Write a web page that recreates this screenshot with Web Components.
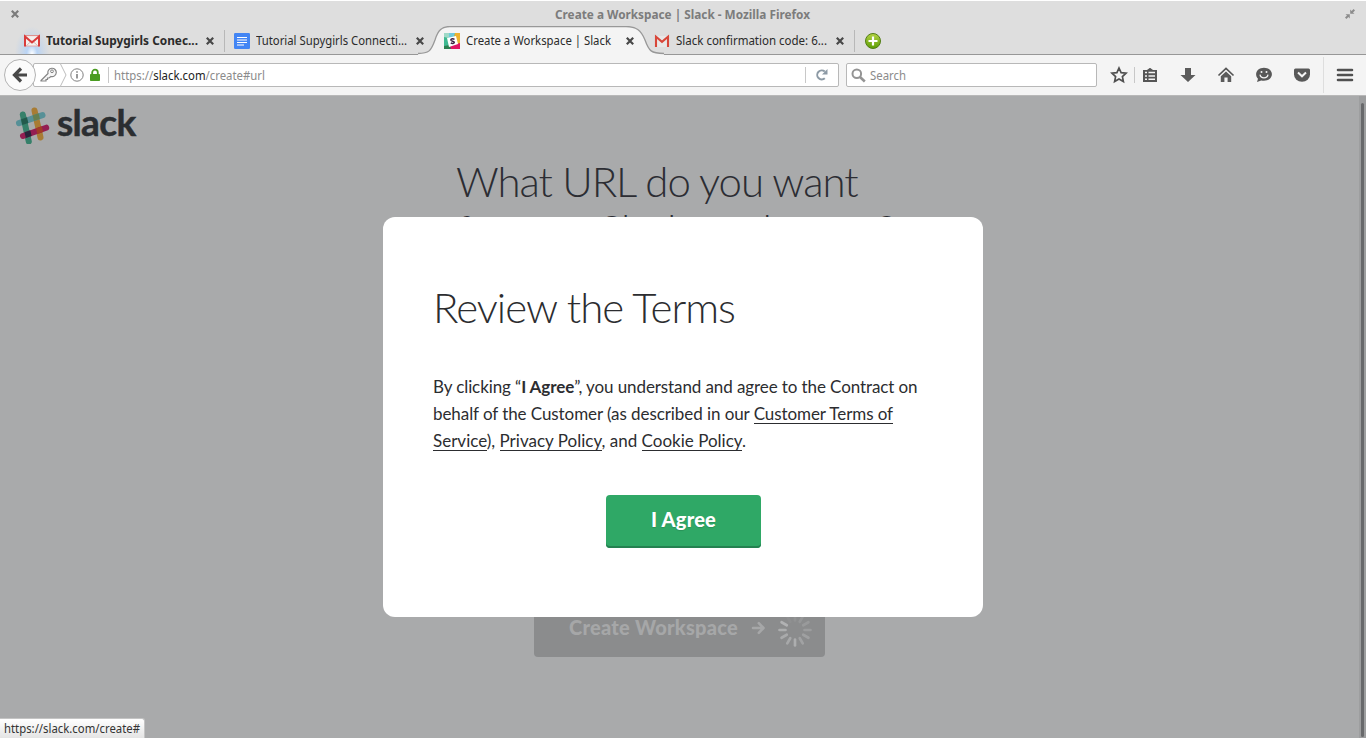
<!DOCTYPE html>
<html lang="en"><head><meta charset="utf-8"><title>Create a Workspace | Slack</title>
<style>html,body{margin:0;height:100%;overflow:hidden}body{font:12px "Noto Sans","Open Sans",sans-serif}</style></head>
<body><browser-window></browser-window>
<script>
const define=(name,html,after)=>customElements.define(name,class extends HTMLElement{
  connectedCallback(){
    if(this.shadowRoot)return;
    const t=document.createElement('template');
    t.innerHTML=typeof html==='function'?html(this):html;
    this.attachShadow({mode:'open'}).append(t.content.cloneNode(true));
    if(after)after(this);
  }
});

// A single text line fitted to a given width, by tracking or (with "narrow") by condensing the glyphs.
define('fit-text','<style>:host{display:block;white-space:nowrap}span{display:inline-block;white-space:pre;transform-origin:0 50%}</style><span><slot></slot></span>',el=>{
  const s=el.shadowRoot.querySelector('span'),w=+el.getAttribute('w'),n=s.getBoundingClientRect().width;
  if(el.hasAttribute('narrow')){el.style.width=w+'px';s.style.transform=`scaleX(${w/n})`}
  else s.style.letterSpacing=(w-n)/el.textContent.length+'px';
});

const icons={
x:[10,10,'<path d="M1.800 1.800l6.400 6.400M8.200 1.800l-6.400 6.400" stroke="currentColor" stroke-width="2.200"/>'],
gmail:[18,16,'<path d="M2 3h14v10H2z" fill="#f4f0ef"/><path d="M3 13l6-5.500 6 5.500" fill="none" stroke="#d8b5b3"/><path d="M2 2.600h14" stroke="#e08884"/><path d="M2 13h14" stroke="#e8aaa7"/><path d="M2 13.500V3.500l7 6 7-6v10" fill="none" stroke="#d93b3b" stroke-width="2"/>'],
gmail2:[18,16,'<path d="M3 3h12v11H3z" fill="#e8e8e8"/><path d="M3 14V3.800l6 5 6-5V14" fill="none" stroke="#d8473a" stroke-width="2.100"/>'],
doc:[16,16,'<rect width="16" height="16" rx="1.2" fill="#4285f4"/><path d="M3 4.500h10M3 7h10M3 9.500h10M3 12h7" stroke="#fff" stroke-width="1.2"/>'],
slack:[16,16,'<path d="M0 0h16v16H0z" fill="#3eb991"/><path d="M0 0h7L4.500 5 0 4z" fill="#9fd9c7"/><path d="M5 0h6l-1 4-5 1z" fill="#70cadb"/><path d="M11 0h5v11l-4 1-2-8z" fill="#ecb22e"/><path d="M0 13l12-2 4 5H0z" fill="#2b7f50"/><path d="M6 13l10-3v6H7z" fill="#e01563"/><path d="M3 5l9-2 2 8-9 3z" fill="#fff"/><path d="M10.500 6.300C8.500 5.300 6.500 6 7 7.300c.5 1.200 3.200.5 3.300 2 0 1.500-2.300 1.500-3.500.6" fill="none" stroke="#3c2140" stroke-width="1.500"/>'],
plus:[18,18,'<defs><linearGradient id="g" x2="0" y2="1"><stop stop-color="#b5d344"/><stop offset="1" stop-color="#5c9d05"/></linearGradient></defs><circle cx="9" cy="9" r="7.500" fill="url(#g)" stroke="#527e16"/><path d="M9 4.500v9M4.500 9h9" stroke="#fff" stroke-width="2.200"/>'],
restore:[12,12,'<path d="M6.200 5.800V1.500L7.600 3 9.600 1 11 2.400 9 4.400l1.500 1.400zM5.800 6.200v4.300L4.400 9l-2 2L1 9.600l2-2L1.500 6.200z" fill="#8c8c8c"/>'],
back:[34,34,'<circle cx="17" cy="17" r="15.500" fill="#fbfbfb" stroke="#b3b3b3"/><path d="M18 10.500L11.500 17l6.500 6.500M12 17h12" fill="none" stroke="#484848" stroke-width="3.200"/>'],
key:[18,18,'<path d="M2 14.500l7-7a4.200 4.200 0 1 1 3 3l-2 1.500H8.500v1.500H7V15H2z" fill="#f7f7f7" stroke="#858585" stroke-width="1.200"/><circle cx="13" cy="5.300" r="1.400" fill="none" stroke="#858585"/>'],
chev:[9,24,'<path d="M1 0l6 12-6 12" fill="none" stroke="#bdbdbd"/>'],
info:[14,14,'<circle cx="7" cy="7" r="6.200" fill="none" stroke="#808080"/><path d="M7 6v4.500M7 3.200v1.600" stroke="#777" stroke-width="1.500"/>'],
lock:[12,14,'<path d="M3.200 7V4.500a2.800 2.800 0 0 1 5.600 0V7" fill="none" stroke="#4a9c21" stroke-width="1.800"/><rect x="1" y="6" width="10" height="7" rx=".8" fill="#4a9c21"/>'],
reload:[14,14,'<path d="M9.800 10.200A4.500 4.500 0 1 1 9.800 3.600" fill="none" stroke="#8d9aa5" stroke-width="2"/><path d="M12.500 1v5.500H7z" fill="#8d9aa5"/>'],
mag:[15,15,'<circle cx="5.800" cy="5.800" r="4.300" fill="none" stroke="#949494" stroke-width="2"/><path d="M9 9l4.800 4.500" stroke="#949494" stroke-width="2.600"/>'],
star:[18,18,'<path d="M9 2l2.100 4.600 5 .6-3.700 3.400 1 5L9 13.100l-4.400 2.500 1-5L1.900 7.200l5-.6z" fill="none" stroke="#505050" stroke-width="1.700"/>'],
list:[18,18,'<path d="M2 4h4l2.700-2h.6L12 4h4v12H2z" fill="#565656"/><path d="M4 6.500h2M7.500 6.500h6.500M4 10h2M7.500 10h6.500M4 13.300h2M7.500 13.300h6.500" stroke="#f4f4f4" stroke-width="1.500"/>'],
down:[18,18,'<path d="M6 2h6v7h4.500L9 16 1.500 9H6z" fill="#5b5b5b"/>'],
home:[18,18,'<path d="M1.500 9.500L9 2.500l7.500 7" fill="none" stroke="#555" stroke-width="1.700"/><path d="M3.800 10.200L9 5.500l5.200 4.700V16h-3.600v-4.500H7.400V16H3.800z" fill="#5b5b5b"/>'],
smile:[18,18,'<path d="M9 1.800c4.400 0 7.900 2.800 7.900 6.500s-3.500 6.500-7.900 6.500c-1 0-1.900-.1-2.700-.4L2 16l1-3.200C1.800 11.600 1.100 10 1.100 8.300 1.100 4.600 4.600 1.800 9 1.800z" fill="#585858"/><path d="M5 8.700c.8 4.300 7.200 4.300 8 0" fill="#585858" stroke="#f4f4f4" stroke-width="1.300"/><circle cx="6.500" cy="6" r="1" fill="#f4f4f4"/><circle cx="11.500" cy="6" r="1" fill="#f4f4f4"/>'],
pocket:[18,18,'<path d="M2.500 2.500h13q1.500 0 1.500 1.500v4.500a8 7.300 0 0 1-16 0V4q0-1.500 1.500-1.500z" fill="#585858"/><path d="M5 6.500l4 3.800 4-3.800" fill="none" stroke="#f4f4f4" stroke-width="2"/>'],
menu:[18,18,'<path d="M2 4h14M2 9h14M2 14h14" stroke="#505050" stroke-width="2.600" stroke-linecap="round"/>'],
arrow:[14,14,'<path d="M2 7h10M7.800 2.200L12.500 7l-4.700 4.800" fill="none" stroke="#a6a7a8" stroke-width="2.600" stroke-linecap="round" stroke-linejoin="round"/>'],
logo:[36,38,'<g stroke-width="6" stroke-linecap="round"><path d="M19.500 4.500l6 27" stroke="#a87c34"/><path d="M4 17.200L27.500 9.200" stroke="#579097"/><path d="M7.800 8.500l6 27" stroke="#36806a"/><path d="M8 30L31.200 21.700" stroke="#941e52"/></g><path d="M6.100 13.300l5.900-2 1.300 5.700-6 2z" fill="#235a4c"/><path d="M17.700 9.300l5.900-2 1.300 5.700-6 2z" fill="#667f50"/><path d="M9.500 26.300l5.800-2 1.300 5.700-5.800 2z" fill="#29243a"/><path d="M21 22.200l5.800-2 1.300 5.700-5.800 2z" fill="#a13c27"/>'],
spin:[36,36,Array.from({length:12},(_,i)=>`<path d="M18 2.500v6" stroke="#b1b2b3" stroke-width="2.700" stroke-linecap="round" opacity="${[.2,.3,.38,.45,.55,.6,.9,.75,.8,.9,1,.12][i]}" transform="rotate(${i*30} 18 18)"/>`).join('')]
};
define('ui-icon',el=>{const [w,h,p]=icons[el.getAttribute('name')];return `<style>:host{display:block;flex:none;width:${w}px;height:${h}px}svg{display:block}</style><svg width="${w}" height="${h}" viewBox="0 0 ${w} ${h}">${p}</svg>`});

define('title-bar',`<style>:host{display:grid;grid-template-columns:1fr auto 1fr;height:27px;border-top:1px solid #fff;box-sizing:border-box;align-items:center;color:#7c7c7c;font-weight:bold;padding:0 11px 0 10px}ui-icon:last-child{justify-self:end;margin-right:-1px}</style>
<ui-icon name="x"></ui-icon><fit-text narrow w="255">Create a Workspace | Slack - Mozilla Firefox</fit-text><ui-icon name="restore"></ui-icon>`);

define('browser-tab',el=>`<style>:host{display:flex;position:relative;width:210px;height:28px;align-items:center;box-sizing:border-box;padding:0 10px 0 8px;color:#2b2b2b}
:host([sep])::after{content:"";position:absolute;right:0;top:3px;width:1px;height:22px;background:#b8b8b8}
:host([bold]){font-weight:bold}
.shape{position:absolute;left:-17px;top:-1px}.fav{width:18px;display:grid;place-items:center;margin-right:5px;position:relative}fit-text{position:relative;padding-bottom:2px}.x{color:#484848;position:relative;margin-left:auto}
.glow{position:absolute;left:0;top:0;width:34px;height:27px;background:radial-gradient(ellipse at 50% 100%,#fff 0,#b9d4f5 22%,#bcd2ee88 45%,transparent 72%)}</style>
${el.hasAttribute('active')?'<svg class="shape" width="262" height="30"><path d="M0 29V27.500C11 27.500 13 25 17 14 20 4 24 .500 32 .500H208C218 .500 223 4 227 14 231 25 233 27.500 246 27.500V29Z" fill="#f4f4f4"/><path d="M0 27.500C11 27.500 13 25 17 14 20 4 24 .500 32 .500H208C218 .500 223 4 227 14 231 25 233 27.500 246 27.500" fill="none" stroke="#989898" stroke-width="1.300"/></svg>':''}
${el.hasAttribute('bold')?'<div class="glow"></div>':''}
<div class="fav"><ui-icon name="${el.getAttribute('icon')}"></ui-icon></div><fit-text narrow w="${el.getAttribute('w')}">${el.getAttribute('label')}</fit-text><ui-icon class="x" name="x"></ui-icon>`);

define('tab-strip',`<style>:host{display:flex;height:28px;padding-left:15px;box-shadow:inset 0 -1px #979797}ui-icon{margin:5px 0 0 9px}browser-tab[active]{z-index:0}browser-tab[icon=gmail2]{z-index:1}</style>
<browser-tab bold sep icon="gmail" w="152" label="Tutorial Supygirls Conec..."></browser-tab>
<browser-tab icon="doc" w="151" label="Tutorial Supygirls Connecti..."></browser-tab>
<browser-tab active icon="slack" w="145" label="Create a Workspace | Slack"></browser-tab>
<browser-tab sep icon="gmail2" w="151" label="Slack confirmation code: 6..."></browser-tab>
<ui-icon name="plus"></ui-icon>`);

define('nav-bar',`<style>:host{display:flex;height:41px;box-sizing:border-box;background:#f4f4f4;border-bottom:1px solid #b8b8b8;align-items:center;padding-left:3px;color:#8b8b8b}
.back{z-index:1}.field{box-sizing:border-box;height:24px;border:1px solid #b8b8b8;border-radius:2px;background:#fff;display:flex;align-items:center}
.url{width:806px;margin-left:-4px;padding-left:5px}.search{width:251px;margin-left:7px;padding-left:4px;gap:4px}
b{font-weight:normal;color:#222}.v{width:1px;height:16px;background:#c8c8c8}
.tools{display:flex;flex:1;align-items:center;padding-left:13px}.tools ui-icon+ui-icon{margin-left:20px}</style>
<ui-icon class="back" name="back"></ui-icon>
<div class="field url"><ui-icon name="key"></ui-icon><ui-icon name="chev" style="margin-left:2px"></ui-icon><ui-icon name="info" style="margin-left:2px"></ui-icon><ui-icon name="lock" style="margin-left:5px"></ui-icon><div class="v" style="margin:0 5px 0 7px"></div>
<fit-text narrow w="151">https://<b>slack.com</b>/create#url</fit-text><div class="v" style="margin-left:auto"></div><ui-icon name="reload" style="margin:0 9px"></ui-icon></div>
<div class="field search"><ui-icon name="mag"></ui-icon><fit-text narrow w="36">Search</fit-text></div>
<div class="tools"><ui-icon name="star"></ui-icon><div class="v" style="margin:0 6px 0 6px"></div><ui-icon name="list"></ui-icon><ui-icon name="down"></ui-icon><ui-icon name="home"></ui-icon><ui-icon name="smile"></ui-icon><ui-icon name="pocket"></ui-icon><div class="v" style="height:36px;background:#dedede;margin:0 12px"></div><ui-icon name="menu"></ui-icon></div>`);

define('workspace-form',`<style>:host{display:flex;flex-direction:column;height:100%;position:relative;font-family:Lato,sans-serif;color:#2c2d33}
.logo{display:flex;height:61px;align-items:flex-start;padding:10px 0 0 15px;box-sizing:border-box;gap:6px}
.word{font-size:37px;line-height:31px;font-weight:700;color:#2b2e31;-webkit-text-stroke:.5px #2b2e31}
h1{margin:0 0 0 456px;font-size:42px;line-height:48px;font-weight:300;flex:1}
.btn{display:flex;width:291px;height:62px;background:#8b8c8d;border-radius:4px;align-items:center;margin:0 0 81px 534px;box-sizing:border-box;padding:3px 0 0 35px;color:#a6a7a8;font-size:20px;font-weight:900}
.bar{position:absolute;right:0;top:0;width:7px;height:100%;background:#9d9e9f}.bar i{display:block;width:3px;height:634px;margin:7px 0 0 2px;background:#68696b;border-radius:2px}</style>
<div class="logo"><ui-icon name="logo"></ui-icon><fit-text class="word" w="78.500">slack</fit-text></div>
<h1><fit-text w="401.500">What URL do you want</fit-text><fit-text w="439">for your Slack workspace?</fit-text></h1>
<div class="btn"><fit-text w="169" style="padding-bottom:1px">Create Workspace</fit-text><ui-icon name="arrow" style="margin-left:13px"></ui-icon><ui-icon name="spin" style="margin:5px 0 0 12px"></ui-icon></div><div class="bar"><i></i></div>`);

define('terms-dialog',`<style>:host{display:flex;flex-direction:column;width:600px;height:400px;box-sizing:border-box;background:#fff;border-radius:12px;padding:64px 50px;font-family:Lato,sans-serif;color:#2c2d30}
h2{margin:0;font-size:42px;line-height:52px;font-weight:300}.p{font-size:17px;line-height:27px;margin-top:40px}u{text-decoration:none;box-shadow:inset 0 -1px #2c2d30}
button{align-self:center;margin:41px 0 0 1px;width:155px;height:53px;border:0;border-radius:4px;background:#2fa866;box-shadow:inset 0 -2px #248150;color:#fff;font:900 20px Lato,sans-serif;padding:0 0 5px 45px;text-shadow:0 1px 1px #0002;text-align:left}</style>
<h2><fit-text w="302">Review the Terms</fit-text></h2><div class="p"><fit-text w="484.500">By clicking “<b>I Agree</b>”, you understand and agree to the Contract on</fit-text><fit-text w="460">behalf of the Customer (as described in our <u>Customer Terms of</u></fit-text><fit-text w="313"><u>Service</u>), <u>Privacy Policy</u>, and <u>Cookie Policy</u>.</fit-text></div>
<button><fit-text w="65">I Agree</fit-text></button>`);

define('browser-window',`<style>:host{display:flex;flex-direction:column;width:1366px;height:738px;background:#dedede;overflow:hidden}
main{position:relative;flex:1;min-height:0;background:#a9aaab}.over{position:absolute;inset:0;display:grid;place-items:center}
.status{position:absolute;left:0;bottom:0;height:20px;box-sizing:border-box;width:145px;padding:0 4px;line-height:19px;background:linear-gradient(#fff,#e4e4e4);border:1px solid #c4c4c4;border-left:0;border-bottom:0;border-radius:0 3px 0 0;color:#333}</style>
<title-bar></title-bar><tab-strip></tab-strip><nav-bar></nav-bar><main><workspace-form></workspace-form><div class="over"><terms-dialog></terms-dialog></div><div class="status"><fit-text narrow w="136">https://slack.com/create#</fit-text></div></main>`);
</script></body></html>
